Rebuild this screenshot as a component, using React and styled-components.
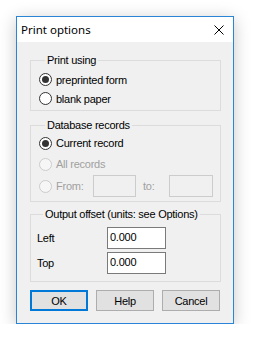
import React from 'react';
import styled, { createGlobalStyle } from 'styled-components';

const Global = createGlobalStyle`
  html, body { margin: 0; background: #fff; }
  body {
    font-family: "Liberation Sans", Arial, sans-serif;
    font-size: 11px;
    letter-spacing: -0.25px;
    color: #000;
  }
`;

const Page = styled.div`
  padding: 16px 0 0 16px;
`;

const Window = styled.div`
  width: 218px;
  height: 308px;
  box-sizing: border-box;
  border: 1px solid #2a85d6;
  background: #f0f0f0;
  box-shadow: 0 3px 16px rgba(0, 0, 0, 0.22);
  display: flex;
  flex-direction: column;
`;

const TitleBar = styled.div`
  height: 25px;
  flex: none;
  background: #fff;
  display: flex;
  align-items: center;
  justify-content: space-between;
  padding: 0 9px 0 4px;
  font-family: "Noto Sans", sans-serif;
  font-size: 11.5px;
  letter-spacing: 0;
`;

const Body = styled.div`
  padding: 0 12px 0 13px;
  display: flex;
  flex-direction: column;
`;

const Group = styled.fieldset`
  margin: ${p => p.$top}px 0 0;
  padding: ${p => p.$pad};
  border: 1px solid #dcdcdc;
  min-width: 0;
  display: flex;
  flex-direction: column;
  gap: ${p => p.$gap || 0}px;
`;

const Legend = styled.legend`
  margin-left: 6px;
  padding: 0 2px;
  line-height: 13px;
`;

const Row = styled.div`
  display: flex;
  align-items: center;
  height: ${p => p.$h}px;
  color: ${p => (p.$disabled ? '#a0a0a0' : '#000')};
`;

const Circle = styled.span`
  width: 13px;
  height: 13px;
  box-sizing: border-box;
  border-radius: 50%;
  border: 1px solid ${p => (p.$disabled ? '#cccccc' : '#333333')};
  background: ${p => (p.$disabled ? '#f6f6f6' : '#fff')};
  display: flex;
  align-items: center;
  justify-content: center;
  margin-right: 4px;
  flex: none;
  &::after {
    content: '';
    display: ${p => (p.$checked ? 'block' : 'none')};
    width: 7px;
    height: 7px;
    border-radius: 50%;
    background: #333;
  }
`;

const FixedLabel = styled.span`
  width: ${p => p.$w}px;
  flex: none;
`;

const Field = styled.div`
  width: ${p => p.$w}px;
  height: ${p => p.$h}px;
  box-sizing: border-box;
  flex: none;
  border: 1px solid ${p => (p.$disabled ? '#cccccc' : '#7a7a7a')};
  background: ${p => (p.$disabled ? '#f0f0f0' : '#fff')};
  padding: 3px 2px 0;
  line-height: 13px;
  color: #000;
`;

const ToLabel = styled.span`
  margin-left: 7px;
  width: 26px;
  flex: none;
`;

const Buttons = styled.div`
  display: flex;
  gap: 8px;
  margin-top: 8px;
`;

const Button = styled.div`
  width: 58px;
  height: 21px;
  box-sizing: border-box;
  background: #e1e1e1;
  border: ${p => (p.$default ? '2px solid #0078d7' : '1px solid #adadad')};
  display: flex;
  align-items: center;
  justify-content: center;
`;

const Radio = ({ checked, disabled, children, h = 19 }) => (
  <Row $h={h} $disabled={disabled}>
    <Circle $checked={checked} $disabled={disabled} />
    {children}
  </Row>
);

export default function App() {
  return (
    <Page>
      <Global />
      <Window>
        <TitleBar>
          <span>Print options</span>
          <svg width="10" height="10" viewBox="0 0 10 10">
            <path d="M0.5 0.5L9.5 9.5M9.5 0.5L0.5 9.5" stroke="#000" strokeWidth="1" />
          </svg>
        </TitleBar>
        <Body>
          <Group $top={12} $pad="3px 8px 2px">
            <Legend>Print using</Legend>
            <Radio checked>preprinted form</Radio>
            <Radio>blank paper</Radio>
          </Group>

          <Group $top={8} $pad="1px 8px 4px" $gap={1}>
            <Legend>Database records</Legend>
            <Radio checked h={20}>Current record</Radio>
            <Radio disabled h={20}>All records</Radio>
            <Row $h={22} $disabled>
              <Circle $disabled />
              <FixedLabel $w={37}>From:</FixedLabel>
              <Field $w={43} $h={22} $disabled />
              <ToLabel>to:</ToLabel>
              <Field $w={44} $h={22} $disabled />
            </Row>
          </Group>

          <Group $top={6} $pad="6px 8px 7px 6px" $gap={3}>
            <Legend>Output offset (units: see Options)</Legend>
            <Row $h={22}>
              <FixedLabel $w={70}>Left</FixedLabel>
              <Field $w={59} $h={22}>0.000</Field>
            </Row>
            <Row $h={22}>
              <FixedLabel $w={70}>Top</FixedLabel>
              <Field $w={59} $h={22}>0.000</Field>
            </Row>
          </Group>

          <Buttons>
            <Button $default>OK</Button>
            <Button>Help</Button>
            <Button>Cancel</Button>
          </Buttons>
        </Body>
      </Window>
    </Page>
  );
}
